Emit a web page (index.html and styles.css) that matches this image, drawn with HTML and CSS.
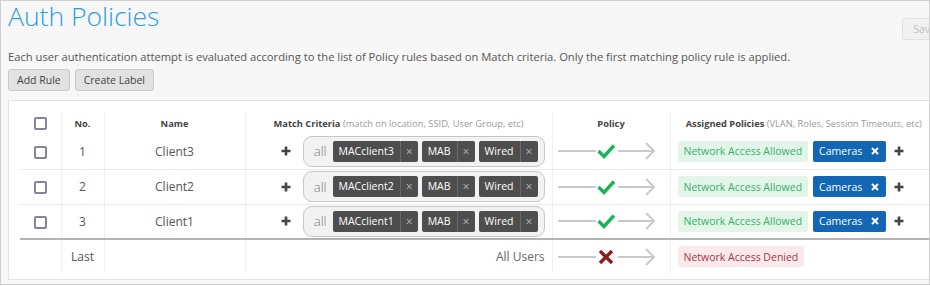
FILE: index.html
```html
<!DOCTYPE html>
<html lang="en">
    <head>
        <meta charset="UTF-8" />
        <title>Auth Policies</title>
        <link rel="stylesheet" href="styles.css">
    </head>
    <body>
        <div class="frame">
            <div class="page">
                <div class="head">
                    <h1 class="title">Auth Policies</h1>
                    <button class="btn btn-save">Save</button>
                </div>
                <p class="desc">Each user authentication attempt is evaluated according to the list of Policy rules based on Match criteria. Only the first matching policy rule is applied.</p>
                <div class="actions">
                    <button class="btn">Add Rule</button>
                    <button class="btn">Create Label</button>
                </div>

                <div class="panel">
                    <table class="rules">
                        <colgroup>
                            <col class="c-check" />
                            <col class="c-no" />
                            <col class="c-name" />
                            <col class="c-match" />
                            <col class="c-policy" />
                            <col />
                        </colgroup>
                        <thead>
                            <tr>
                                <th><span class="checkbox"></span></th>
                                <th>No.</th>
                                <th>Name</th>
                                <th>Match Criteria <span class="hint">(match on location, SSID, User Group, etc)</span></th>
                                <th>Policy</th>
                                <th>Assigned Policies <span class="hint">(VLAN, Roles, Session Timeouts, etc)</span></th>
                            </tr>
                        </thead>
                        <tbody>
                            <tr>
                                <td><span class="checkbox"></span></td>
                                <td class="num">1</td>
                                <td class="name">Client3</td>
                                <td>
                                    <div class="match">
                                        <svg class="plus" viewBox="0 0 10 10"><path d="M5 0.5V9.5M0.5 5H9.5" /></svg>
                                        <div class="criteria">
                                            <span class="all">all</span>
                                            <span class="tag"><span class="tag-text">MACclient3</span><span class="tag-x">&times;</span></span>
                                            <span class="tag"><span class="tag-text">MAB</span><span class="tag-x">&times;</span></span>
                                            <span class="tag"><span class="tag-text">Wired</span><span class="tag-x">&times;</span></span>
                                        </div>
                                    </div>
                                </td>
                                <td class="policy">
                                    <svg class="flow" viewBox="0 0 98 20">
                                        <path class="flow-line" d="M0 10H38M60 10H96M88 2L96 10L88 18" />
                                        <path class="ok" d="M40.5 10L46 15.5L56 4.5" />
                                    </svg>
                                </td>
                                <td>
                                    <div class="assigned">
                                        <span class="pill pill-allow">Network Access Allowed</span>
                                        <span class="pill pill-label">Cameras <svg class="x" viewBox="0 0 8 8"><path d="M1 1L7 7M7 1L1 7" /></svg></span>
                                        <svg class="plus" viewBox="0 0 10 10"><path d="M5 0.5V9.5M0.5 5H9.5" /></svg>
                                    </div>
                                </td>
                            </tr>
                            <tr>
                                <td><span class="checkbox"></span></td>
                                <td class="num">2</td>
                                <td class="name">Client2</td>
                                <td>
                                    <div class="match">
                                        <svg class="plus" viewBox="0 0 10 10"><path d="M5 0.5V9.5M0.5 5H9.5" /></svg>
                                        <div class="criteria">
                                            <span class="all">all</span>
                                            <span class="tag"><span class="tag-text">MACclient2</span><span class="tag-x">&times;</span></span>
                                            <span class="tag"><span class="tag-text">MAB</span><span class="tag-x">&times;</span></span>
                                            <span class="tag"><span class="tag-text">Wired</span><span class="tag-x">&times;</span></span>
                                        </div>
                                    </div>
                                </td>
                                <td class="policy">
                                    <svg class="flow" viewBox="0 0 98 20">
                                        <path class="flow-line" d="M0 10H38M60 10H96M88 2L96 10L88 18" />
                                        <path class="ok" d="M40.5 10L46 15.5L56 4.5" />
                                    </svg>
                                </td>
                                <td>
                                    <div class="assigned">
                                        <span class="pill pill-allow">Network Access Allowed</span>
                                        <span class="pill pill-label">Cameras <svg class="x" viewBox="0 0 8 8"><path d="M1 1L7 7M7 1L1 7" /></svg></span>
                                        <svg class="plus" viewBox="0 0 10 10"><path d="M5 0.5V9.5M0.5 5H9.5" /></svg>
                                    </div>
                                </td>
                            </tr>
                            <tr>
                                <td><span class="checkbox"></span></td>
                                <td class="num">3</td>
                                <td class="name">Client1</td>
                                <td>
                                    <div class="match">
                                        <svg class="plus" viewBox="0 0 10 10"><path d="M5 0.5V9.5M0.5 5H9.5" /></svg>
                                        <div class="criteria">
                                            <span class="all">all</span>
                                            <span class="tag"><span class="tag-text">MACclient1</span><span class="tag-x">&times;</span></span>
                                            <span class="tag"><span class="tag-text">MAB</span><span class="tag-x">&times;</span></span>
                                            <span class="tag"><span class="tag-text">Wired</span><span class="tag-x">&times;</span></span>
                                        </div>
                                    </div>
                                </td>
                                <td class="policy">
                                    <svg class="flow" viewBox="0 0 98 20">
                                        <path class="flow-line" d="M0 10H38M60 10H96M88 2L96 10L88 18" />
                                        <path class="ok" d="M40.5 10L46 15.5L56 4.5" />
                                    </svg>
                                </td>
                                <td>
                                    <div class="assigned">
                                        <span class="pill pill-allow">Network Access Allowed</span>
                                        <span class="pill pill-label">Cameras <svg class="x" viewBox="0 0 8 8"><path d="M1 1L7 7M7 1L1 7" /></svg></span>
                                        <svg class="plus" viewBox="0 0 10 10"><path d="M5 0.5V9.5M0.5 5H9.5" /></svg>
                                    </div>
                                </td>
                            </tr>
                            <tr class="last">
                                <td></td>
                                <td class="num">Last</td>
                                <td></td>
                                <td class="everyone">All Users</td>
                                <td class="policy">
                                    <svg class="flow" viewBox="0 0 98 20">
                                        <path class="flow-line" d="M0 10H38M60 10H96M88 2L96 10L88 18" />
                                        <path class="deny" d="M42 4L54 16M54 4L42 16" />
                                    </svg>
                                </td>
                                <td>
                                    <div class="assigned">
                                        <span class="pill pill-deny">Network Access Denied</span>
                                    </div>
                                </td>
                            </tr>
                        </tbody>
                    </table>
                </div>
            </div>
        </div>
    </body>
</html>
```

FILE: styles.css
```css
* {
    box-sizing: border-box;
}

body {
    margin: 0;
    background-color: #fff;
    font-family: "Open Sans", "Liberation Sans", sans-serif;
    color: #555;
}

.frame {
    width: 930px;
    height: 285px;
    border: 1px solid #cfcfcf;
    background-color: #f7f7f7;
    overflow: hidden;
}

.page {
    width: 980px;
    padding-left: 7px;
}

.head {
    display: flex;
    justify-content: space-between;
    align-items: flex-start;
    padding-right: 34px;
}

.title {
    margin: 0;
    font-size: 26.5px;
    line-height: 30px;
    font-weight: 300;
    color: #2d9de2;
}

.btn {
    height: 22px;
    padding: 0 8px;
    font-family: inherit;
    font-size: 10.5px;
    color: #444;
    background-color: #e2e2e2;
    border: 1px solid #c9c9c9;
    border-radius: 3px;
}

.btn-save {
    margin-top: 17px;
    padding: 0 10px;
    text-align: left;
    color: #c2c2c2;
    background-color: #f1f1f1;
    border-color: #e0e0e0;
}

.desc {
    margin: 10px 0 0;
    font-size: 11.2px;
    line-height: 14px;
    color: #555;
}

.actions {
    display: flex;
    gap: 5px;
    margin-top: 5px;
}

.panel {
    margin-top: 9px;
    padding: 11px 20px 6px 11px;
    background-color: #fff;
    border: 1px solid #e3e3e3;
}

.rules {
    width: 917px;
    border-collapse: collapse;
    table-layout: fixed;
}

.c-check {
    width: 41px;
}

.c-no {
    width: 43px;
}

.c-name {
    width: 141px;
}

.c-match {
    width: 307px;
}

.c-policy {
    width: 118px;
}

.rules th,
.rules td {
    padding: 0;
    text-align: center;
    vertical-align: middle;
}

.rules th + th,
.rules td + td {
    border-left: 1px solid #efefef;
}

.rules th {
    height: 22px;
    font-size: 9.3px;
    font-weight: 700;
    color: #444;
    white-space: nowrap;
}

.hint {
    font-weight: 400;
    color: #9a9a9a;
}

.rules td {
    height: 35px;
    font-size: 12px;
    color: #555;
}

.rules tbody tr + tr td {
    border-top: 1px solid #e9e9e9;
}

.rules tbody tr.last td {
    height: 34px;
    border-top: 2px solid #b3b3b3;
}

.checkbox {
    display: inline-block;
    width: 13px;
    height: 13px;
    border: 2px solid #85859a;
    border-radius: 2px;
    vertical-align: middle;
}

.num {
    color: #666;
}

.match {
    display: flex;
    justify-content: flex-end;
    align-items: center;
    gap: 12px;
    padding-right: 7px;
}

.plus {
    width: 10px;
    height: 10px;
    flex: none;
}

.plus path {
    stroke: #444;
    stroke-width: 2.6;
    fill: none;
}

.criteria {
    display: flex;
    align-items: center;
    gap: 4px;
    height: 31px;
    padding: 0 6px 0 10px;
    background-color: #f2f2f2;
    border: 1px solid #c6c6c6;
    border-radius: 9px;
}

.all {
    margin-right: 2px;
    font-size: 13px;
    font-weight: 300;
    color: #777;
}

.tag {
    display: flex;
    height: 21px;
    background-color: #4e4e4e;
    border-radius: 2px;
    font-size: 10.5px;
    line-height: 21px;
    color: #fff;
}

.tag-text {
    padding: 0 6px;
}

.tag-x {
    width: 18px;
    border-left: 1px solid #6a6a6a;
    color: #b5b5b5;
    font-size: 12px;
}

.policy {
    text-align: left !important;
    padding-left: 5px !important;
}

.flow {
    display: block;
    width: 98px;
    height: 20px;
    fill: none;
}

.flow-line {
    stroke: #c9c9c9;
    stroke-width: 2;
}

.ok {
    stroke: #19b458;
    stroke-width: 3.4;
}

.deny {
    stroke: #8e1b1f;
    stroke-width: 3.4;
}

.assigned {
    display: flex;
    align-items: center;
    gap: 5px;
    padding-left: 7px;
}

.pill {
    display: inline-flex;
    align-items: center;
    height: 21px;
    padding: 0 6px;
    border-radius: 3px;
    font-size: 10.5px;
}

.pill-allow {
    background-color: #e2f5e8;
    color: #34b268;
}

.pill-deny {
    background-color: #fbe9ec;
    color: #a53549;
}

.pill-label {
    gap: 9px;
    padding-right: 7px;
    background-color: #1266b4;
    color: #fff;
    border-radius: 2px;
}

.x {
    width: 8px;
    height: 8px;
}

.x path {
    stroke: #fff;
    stroke-width: 2;
}

.assigned .plus {
    margin-left: 3px;
}

.everyone {
    text-align: right !important;
    padding-right: 7px !important;
    color: #666 !important;
}
```
